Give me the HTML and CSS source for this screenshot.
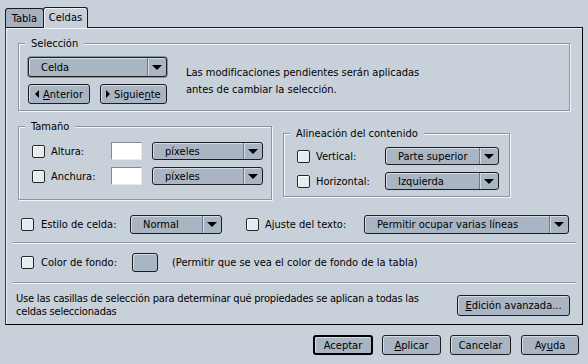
FILE: index.html
```html
<!DOCTYPE html>
<html lang="es">
<head>
<meta charset="utf-8">
<title>Propiedades de tabla</title>
<link rel="stylesheet" href="styles.css">
</head>
<body>
<div class="dialog">
  <div class="tabs">
    <div class="tab">Tabla</div>
    <div class="tab active">Celdas</div>
  </div>
  <div class="panel">
    <fieldset class="group">
      <legend>Selección</legend>
      <div class="sel-body">
        <div class="sel-controls">
          <div class="combo combo-focus w-sel"><span class="val">Celda</span><span class="drop"></span></div>
          <div class="nav-row">
            <div class="btn btn-prev"><span class="tri tri-left"></span><span><u>A</u>nterior</span></div>
            <div class="btn btn-next"><span class="tri tri-right"></span><span>Siguie<u>n</u>te</span></div>
          </div>
        </div>
        <p class="note">Las modificaciones pendientes serán aplicadas<br>antes de cambiar la selección.</p>
      </div>
    </fieldset>

    <div class="row-groups">
      <fieldset class="group group-size">
        <legend>Tamaño</legend>
        <div class="grid grid-size">
          <span class="check"></span><span class="lbl">Altura:</span><span class="input"></span>
          <div class="combo combo-sm"><span class="val">píxeles</span><span class="drop"></span></div>
          <span class="check"></span><span class="lbl">Anchura:</span><span class="input"></span>
          <div class="combo combo-sm"><span class="val">píxeles</span><span class="drop"></span></div>
        </div>
      </fieldset>
      <fieldset class="group group-align">
        <legend>Alineación del contenido</legend>
        <div class="grid grid-align">
          <span class="check"></span><span class="lbl">Vertical:</span>
          <div class="combo combo-sm"><span class="val">Parte superior</span><span class="drop"></span></div>
          <span class="check"></span><span class="lbl">Horizontal:</span>
          <div class="combo combo-sm"><span class="val">Izquierda</span><span class="drop"></span></div>
        </div>
      </fieldset>
    </div>

    <div class="row row-style">
      <span class="check"></span><span class="lbl lbl-style">Estilo de celda:</span>
      <div class="combo combo-row w-style"><span class="val">Normal</span><span class="drop"></span></div>
      <span class="check check-wrap"></span><span class="lbl lbl-wrap">Ajuste del texto:</span>
      <div class="combo combo-row w-wrap"><span class="val">Permitir ocupar varias líneas</span><span class="drop"></span></div>
    </div>

    <div class="sep sep-1"></div>

    <div class="row row-color">
      <span class="check"></span><span class="lbl lbl-color">Color de fondo:</span>
      <span class="swatch"></span>
      <span class="hint">(Permitir que se vea el color de fondo de la tabla)</span>
    </div>

    <div class="sep sep-2"></div>

    <div class="footer">
      <p class="footer-text">Use las casillas de selección para determinar qué propiedades se aplican a todas las<br>celdas seleccionadas</p>
      <div class="btn btn-adv"><span><u>E</u>dición avanzada...</span></div>
    </div>
  </div>

  <div class="actions">
    <div class="btn btn-act btn-default w-ok">Aceptar</div>
    <div class="btn btn-act w-apply"><span><u>A</u>plicar</span></div>
    <div class="btn btn-act w-cancel">Cancelar</div>
    <div class="btn btn-act w-help"><span>Ay<u>u</u>da</span></div>
  </div>
</div>
</body>
</html>
```

FILE: styles.css
```css
* { box-sizing: border-box; }
html, body { margin: 0; padding: 0; }
body {
  width: 588px;
  height: 364px;
  overflow: hidden;
  background: #c8d0da;
  color: #000;
  font-family: "DejaVu Sans Condensed", "DejaVu Sans", sans-serif;
  font-size: 11px;
  line-height: 13px;
}
u { text-decoration: underline; text-underline-offset: 1px; }
p { margin: 0; }

.dialog {
  display: flex;
  flex-direction: column;
  padding: 7px 5px 0 5px;
  height: 364px;
}

/* tabs */
.tabs { display: flex; align-items: flex-end; height: 20px; }
.tab {
  height: 19px;
  width: 39px;
  border: 1px solid #1a1a1a;
  border-bottom: none;
  border-radius: 3px 3px 0 0;
  background: #a6b2c0;
  display: flex;
  align-items: center;
  justify-content: center;
  padding-top: 1px;
}
.tab.active {
  position: relative;
  z-index: 1;
  height: 21px;
  width: 45px;
  margin-left: -1px;
  margin-bottom: -1px;
  background: #c8d0da;
  box-shadow: inset 1px 1px 0 #eef2f6;
  padding-top: 0;
  padding-bottom: 1px;
}

/* panel */
.panel {
  height: 298px;
  border: 1px solid #000;
  border-top-color: #1a1a1a;
  border-left-color: #3a3a3a;
  box-shadow: inset 1px 1px 0 #eef2f6;
  padding: 9px 12px 0 12px;
  display: flex;
  flex-direction: column;
}

/* group boxes */
.group {
  margin: 0;
  padding: 0;
  min-width: 0;
  border: 1px solid #8b96a2;
  box-shadow: inset 1px 1px 0 #f4f7fa, 1px 1px 0 #f4f7fa;
}
.group legend {
  margin-left: 6px;
  padding: 0 6px;
  height: 13px;
  line-height: 13px;
  background: #c8d0da;
}

.sel-body { display: flex; align-items: center; padding: 7px 12px 6px 9px; }
.sel-controls { display: flex; flex-direction: column; gap: 7px; }
.nav-row { display: flex; gap: 10px; }
.note { margin-left: 19px; line-height: 17px; padding-top: 1px; }

.row-groups { display: flex; align-items: flex-start; gap: 11px; margin-top: 9px; }
.group-size { width: 254px; }
.group-align { width: 227px; margin-top: 7px; }

.grid { display: grid; row-gap: 7px; align-items: center; grid-auto-rows: 18px; }
.grid-size { grid-template-columns: 19px 60px 41px 111px; padding: 9px 8px 14px 13px; }
.grid-align { grid-template-columns: 19px 69px 114px; padding: 7px 8px 6px 13px; }

/* controls */
.check {
  width: 13px;
  height: 13px;
  border: 1px solid #262626;
  border-radius: 2px;
  background: #e4ecef;
  box-shadow: inset 1px 1px 0 #ffffff;
}
.lbl { white-space: nowrap; }
.input {
  width: 31px;
  height: 18px;
  background: #fff;
  border: 1px solid #7f8a95;
  border-right-color: #e6ebf0;
  border-bottom-color: #e6ebf0;
}
.combo {
  display: flex;
  height: 18px;
  border: 1px solid #1e1e1e;
  border-radius: 3px;
  background: #a9b5c3;
  box-shadow: inset 1px 1px 0 #d4dce4;
}
.combo .val {
  flex: 1;
  padding-left: 12px;
  display: flex;
  align-items: center;
  white-space: nowrap;
  overflow: hidden;
}
.combo .drop {
  width: 19px;
  border-left: 1px solid #6e7a87;
  box-shadow: inset 1px 0 0 #d4dce4;
  display: flex;
  align-items: center;
  justify-content: center;
}
.combo .drop::after {
  content: "";
  border-left: 5px solid transparent;
  border-right: 5px solid transparent;
  border-top: 5px solid #000;
}
.combo-focus { box-shadow: 0 0 0 1px #8793a0, inset 1px 1px 0 #d4dce4; }
.w-sel { width: 139px; height: 20px; }
.combo-sm { width: 100%; }
.combo-row { height: 19px; }
.w-style { width: 92px; }
.w-wrap { width: 205px; }

.btn {
  display: flex;
  align-items: center;
  justify-content: center;
  height: 20px;
  border: 1px solid #1c1c1c;
  border-radius: 3px;
  background: #a9b5c3;
  box-shadow: inset 1px 1px 0 #d4dce4;
  white-space: nowrap;
}
.btn-prev { width: 62px; justify-content: flex-start; padding-left: 6px; gap: 4px; }
.btn-next { width: 67px; justify-content: flex-start; padding-left: 5px; gap: 4px; }
.tri { width: 0; height: 0; border-top: 4px solid transparent; border-bottom: 4px solid transparent; }
.tri-left { border-right: 4px solid #000; }
.tri-right { border-left: 4px solid #000; }

/* rows */
.row { display: flex; align-items: center; }
.row-style { margin-top: 15px; padding-left: 3px; }
.row-style .lbl-style { width: 89px; margin-left: 7px; }
.check-wrap { margin-left: 24px; }
.row-style .lbl-wrap { width: 99px; margin-left: 6px; }

.sep {
  height: 2px;
  margin-left: -5px;
  margin-right: -6px;
  border-top: 1px solid #8b96a2;
  border-bottom: 1px solid #f4f7fa;
}
.sep-1 { margin-top: 8px; }
.row-color { margin-top: 9px; padding-left: 3px; }
.lbl-color { width: 91px; margin-left: 7px; }
.swatch {
  width: 26px;
  height: 19px;
  border: 1px solid #1e1e1e;
  border-radius: 3px;
  background: #a9b5c3;
  box-shadow: inset 1px 1px 0 #d4dce4;
}
.hint { margin-left: 14px; white-space: nowrap; }
.sep-2 { margin-top: 10px; }

.footer {
  display: flex;
  align-items: center;
  justify-content: space-between;
  margin-top: 8px;
  margin-left: -2px;
}
.footer-text { line-height: 13px; letter-spacing: -0.2px; }
.btn-adv { width: 113px; height: 21px; }

/* bottom buttons */
.actions {
  display: flex;
  justify-content: flex-end;
  gap: 9px;
  margin-top: 10px;
  padding-right: 4px;
}
.btn-act { height: 20px; }
.btn-default { border: 2px solid #000; }
.w-ok { width: 60px; }
.w-apply { width: 59px; }
.w-cancel { width: 61px; margin-right: 1px; }
.w-help { width: 58px; }
```
